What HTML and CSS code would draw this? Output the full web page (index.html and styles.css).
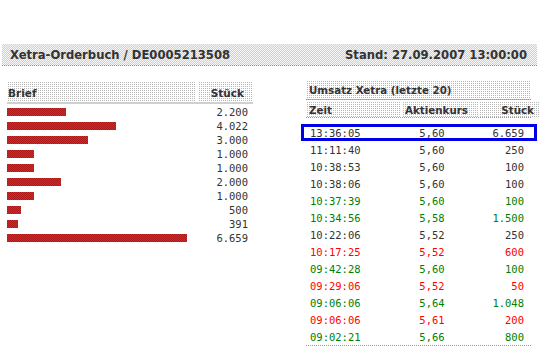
FILE: index.html
```html
<!DOCTYPE html>
<html lang="de">
<head>
    <meta charset="UTF-8">
    <title>Xetra-Orderbuch</title>
    <link rel="stylesheet" href="styles.css">
</head>
<body>
    <div class="topbar">
        <span>Xetra-Orderbuch / DE0005213508</span>
        <span>Stand: 27.09.2007 13:00:00</span>
    </div>

    <div class="panels">
        <div class="book">
            <div class="book-head">
                <div class="cell">Brief</div>
                <div class="cell num">Stück</div>
            </div>
            <div class="book-row"><div><span class="bar" style="width: 59px"></span></div><div class="num">2.200</div></div>
            <div class="book-row"><div><span class="bar" style="width: 109px"></span></div><div class="num">4.022</div></div>
            <div class="book-row"><div><span class="bar" style="width: 81px"></span></div><div class="num">3.000</div></div>
            <div class="book-row"><div><span class="bar" style="width: 27px"></span></div><div class="num">1.000</div></div>
            <div class="book-row"><div><span class="bar" style="width: 27px"></span></div><div class="num">1.000</div></div>
            <div class="book-row"><div><span class="bar" style="width: 54px"></span></div><div class="num">2.000</div></div>
            <div class="book-row"><div><span class="bar" style="width: 27px"></span></div><div class="num">1.000</div></div>
            <div class="book-row"><div><span class="bar" style="width: 14px"></span></div><div class="num">500</div></div>
            <div class="book-row"><div><span class="bar" style="width: 11px"></span></div><div class="num">391</div></div>
            <div class="book-row"><div><span class="bar" style="width: 180px"></span></div><div class="num">6.659</div></div>
        </div>

        <div class="trades">
            <div class="trades-title">Umsatz Xetra (letzte 20)</div>
            <div class="trades-head">
                <div class="cell">Zeit</div>
                <div class="cell mid">Aktienkurs</div>
                <div class="cell num">Stück</div>
            </div>
            <div class="trades-list">
                <div class="trade current"><span>13:36:05</span><span class="mid">5,60</span><span class="num">6.659</span></div>
                <div class="trade"><span>11:11:40</span><span class="mid">5,60</span><span class="num">250</span></div>
                <div class="trade"><span>10:38:53</span><span class="mid">5,60</span><span class="num">100</span></div>
                <div class="trade"><span>10:38:06</span><span class="mid">5,60</span><span class="num">100</span></div>
                <div class="trade up"><span>10:37:39</span><span class="mid">5,60</span><span class="num">100</span></div>
                <div class="trade up"><span>10:34:56</span><span class="mid">5,58</span><span class="num">1.500</span></div>
                <div class="trade"><span>10:22:06</span><span class="mid">5,52</span><span class="num">250</span></div>
                <div class="trade down"><span>10:17:25</span><span class="mid">5,52</span><span class="num">600</span></div>
                <div class="trade up"><span>09:42:28</span><span class="mid">5,60</span><span class="num">100</span></div>
                <div class="trade down"><span>09:29:06</span><span class="mid">5,52</span><span class="num">50</span></div>
                <div class="trade up"><span>09:06:06</span><span class="mid">5,64</span><span class="num">1.048</span></div>
                <div class="trade down"><span>09:06:06</span><span class="mid">5,61</span><span class="num">200</span></div>
                <div class="trade up"><span>09:02:21</span><span class="mid">5,66</span><span class="num">800</span></div>
            </div>
        </div>
    </div>
</body>
</html>
```

FILE: styles.css
```css
body {
    margin: 0;
    background: #fff;
    color: #333;
    font-family: "DejaVu Sans", Verdana, sans-serif;
}

.topbar {
    margin: 44px 2px 0;
    height: 21px;
    padding: 0 10px 0 8px;
    display: flex;
    justify-content: space-between;
    align-items: center;
    font-size: 11.6px;
    font-weight: bold;
    background: repeating-conic-gradient(#d0d0d0 0 25%, #f6f6f6 0 50%) 0 0 / 2px 2px;
    border-bottom: 1px dotted #888;
}

.panels {
    display: flex;
    gap: 53px;
    margin-top: 15px;
    padding-left: 7px;
}

/* linke Seite: Orderbuch */
.book {
    width: 246px;
    padding-top: 1px;
}

.book-head, .book-row {
    display: grid;
    grid-template-columns: 1fr 55px;
    gap: 2px;
}

.book-head {
    height: 20px;
    font-size: 10.5px;
    font-weight: bold;
    border-bottom: 2px solid #d0d0d0;
    margin-bottom: 1px;
}

.book-head .cell {
    display: flex;
    align-items: center;
    padding: 2px 1px 0;
    background: conic-gradient(#b8b8b8 0 25%, #fff 0) 0 0 / 2px 2px;
}

.book-head .num {
    justify-content: flex-end;
    padding-right: 9px;
}

.book-row {
    height: 14px;
    align-items: center;
    font-family: "DejaVu Sans Mono", monospace;
    font-size: 10.5px;
}

.book-row .num {
    text-align: right;
    padding-right: 5px;
}

.bar {
    display: block;
    height: 8px;
    margin-top: -1px;
    background: repeating-conic-gradient(#b01818 0 25%, #dc2626 0 50%) 0 0 / 2px 2px;
}

/* rechte Seite: Umsaetze */
.trades {
    width: 225px;
}

.trades-title {
    height: 18px;
    line-height: 18px;
    padding-left: 3px;
    font-size: 10.3px;
    font-weight: bold;
    background: conic-gradient(#b8b8b8 0 25%, #fff 0) 0 0 / 2px 2px;
    border-bottom: 1px dotted #999;
    margin-bottom: 2px;
}

.trades-head, .trade {
    display: grid;
    grid-template-columns: 92px 60px 62px;
    padding: 0 7px 0 4px;
}

.trades-head {
    height: 15px;
    font-size: 10.3px;
    font-weight: bold;
    border-bottom: 1px dotted #999;
    padding: 0;
    grid-template-columns: 95px 1fr 61px;
    gap: 1px;
}

.trades-head .cell {
    display: flex;
    align-items: center;
    padding-left: 3px;
    background: conic-gradient(#b8b8b8 0 25%, #fff 0) 0 0 / 2px 2px;
}

.trades-head .mid {
    justify-content: flex-end;
    padding-right: 10px;
}

.trades-head .num {
    justify-content: flex-end;
    padding-right: 6px;
}

.trades-list {
    margin-top: 6px;
    border-bottom: 1px dotted #999;
}

.trade {
    height: 17px;
    align-items: center;
    font-family: "DejaVu Sans Mono", monospace;
    font-size: 10.5px;
}

.trade .mid {
    text-align: center;
}

.trade .num {
    text-align: right;
}

.trade.current {
    border: 3px solid #0000e6;
    margin: 0 -6px 0 -5px;
    padding: 0 10px 0 6px;
    height: 11px;
}

.trade.up {
    color: #008000;
}

.trade.down {
    color: #ff0000;
}
```
